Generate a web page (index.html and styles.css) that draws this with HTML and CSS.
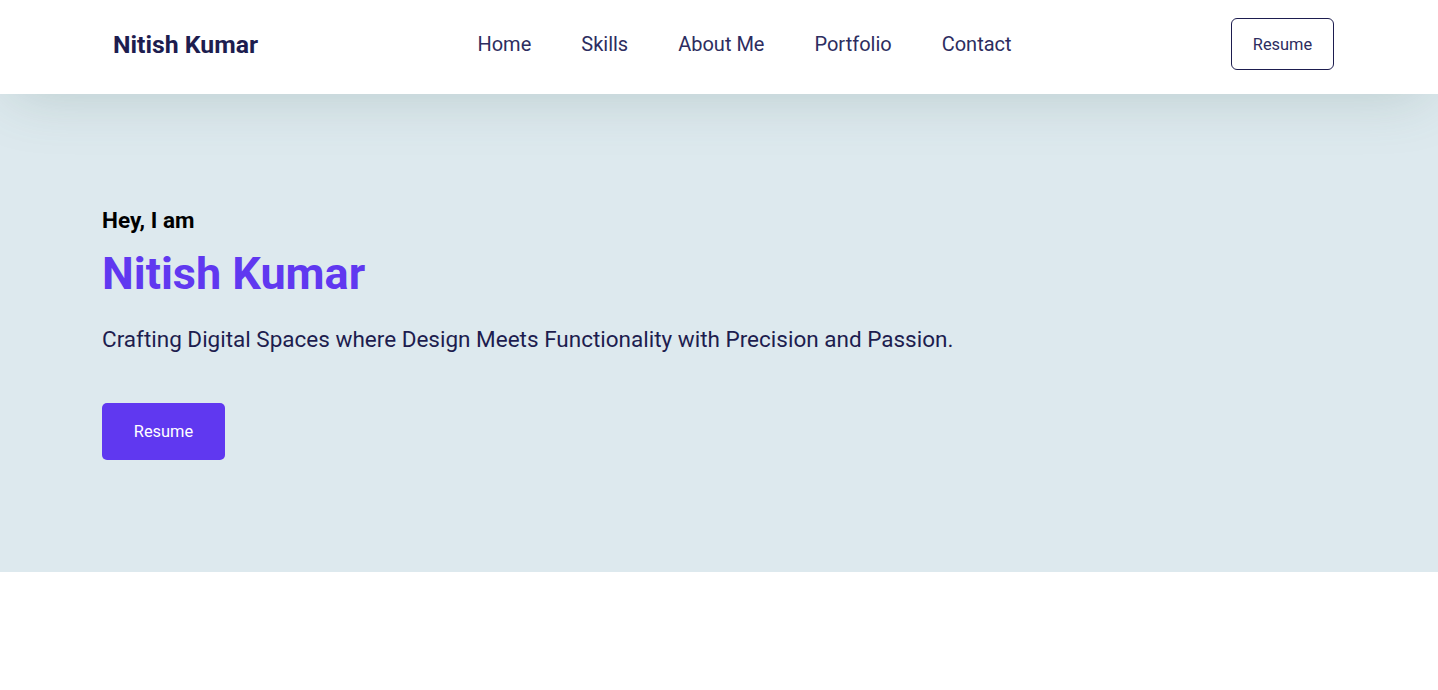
FILE: index.html
```html
<!DOCTYPE html>
<html lang="en">
<head>
<meta charset="utf-8">
<title>Nitish Kumar</title>
<link rel="stylesheet" href="styles.css">
</head>
<body>
<header class="site-header">
  <a class="logo" href="#">Nitish Kumar</a>
  <nav class="nav">
    <a href="#">Home</a>
    <a href="#">Skills</a>
    <a href="#">About Me</a>
    <a href="#">Portfolio</a>
    <a href="#">Contact</a>
  </nav>
  <a class="btn-outline" href="#">Resume</a>
</header>
<section class="hero">
  <p class="hero-hey">Hey, I am</p>
  <h1 class="hero-name">Nitish Kumar</h1>
  <p class="hero-tagline">Crafting Digital Spaces where Design Meets Functionality with Precision and Passion.</p>
  <a class="btn-primary" href="#">Resume</a>
</section>
</body>
</html>
```
FILE: styles.css
```css
* { box-sizing: border-box; }
html, body { margin: 0; padding: 0; background: #fff; }
body { font-family: Roboto, "Liberation Sans", sans-serif; }
a { text-decoration: none; }

.site-header {
  position: relative;
  z-index: 2;
  height: 94px;
  display: flex;
  align-items: center;
  justify-content: space-between;
  padding: 0 104px 6px 113px;
  background: #fff;
  box-shadow: 0 10px 60px -12px rgba(70, 110, 95, 0.26);
}
.logo {
  font-size: 24.8px;
  font-weight: 700;
  color: #1d1d4f;
}
.nav { display: flex; gap: 50px; }
.nav a {
  font-size: 20px;
  color: #2d2d60;
}
.btn-outline {
  width: 103px;
  height: 52px;
  display: flex;
  align-items: center;
  justify-content: center;
  border: 1px solid #1d1d4f;
  border-radius: 6px;
  font-size: 16.4px;
  color: #2d2d60;
}

.hero {
  height: 478px;
  background: #dde9ee;
  padding: 0 102px;
  display: flex;
  flex-direction: column;
  justify-content: center;
  align-items: flex-start;
}
.hero-hey {
  margin: 0;
  font-size: 22.5px;
  font-weight: 700;
  color: #000;
}
.hero-name {
  margin: 14px 0 0;
  font-size: 45px;
  font-weight: 700;
  color: #6038f0;
  line-height: 1.2;
}
.hero-tagline {
  margin: 25px 0 0;
  font-size: 22.5px;
  color: #1d1d4f;
}
.btn-primary {
  margin-top: 51px;
  width: 123px;
  height: 57px;
  display: flex;
  align-items: center;
  justify-content: center;
  background: #6038f0;
  color: #fff;
  border-radius: 5px;
  font-size: 16.4px;
}
```
